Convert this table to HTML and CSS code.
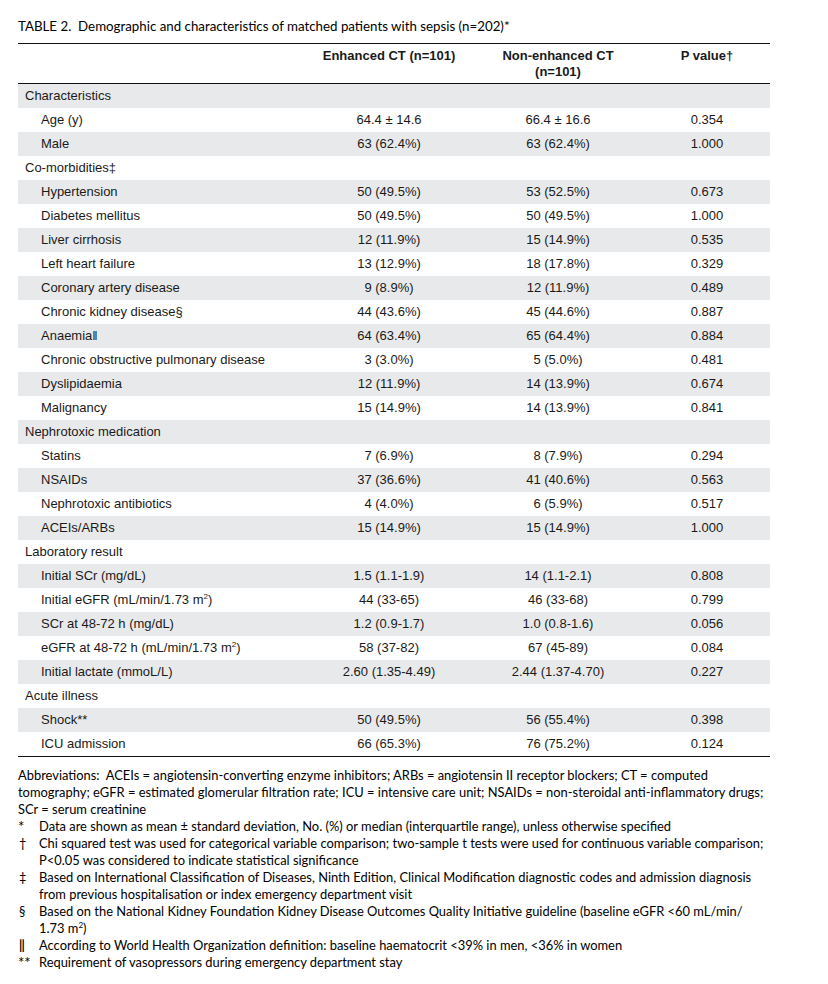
FILE: index.html
```html
<!DOCTYPE html>
<html lang="en">
<head>
<meta charset="utf-8">
<title>Table 2</title>
<link rel="stylesheet" href="styles.css">
</head>
<body>
<div class="page">
  <div class="caption">TABLE 2.&nbsp; Demographic and characteristics of matched patients with sepsis (n=202)*</div>
  <table class="data">
    <colgroup>
      <col class="c-label"><col class="c-enh"><col class="c-non"><col class="c-p">
    </colgroup>
    <thead>
      <tr>
        <th></th>
        <th>Enhanced CT (n=101)</th>
        <th>Non-enhanced CT<br>(n=101)</th>
        <th>P value†</th>
      </tr>
    </thead>
    <tbody>
      <tr class="sec"><td>Characteristics</td><td></td><td></td><td></td></tr>
      <tr><td class="sub">Age (y)</td><td>64.4 ± 14.6</td><td>66.4 ± 16.6</td><td>0.354</td></tr>
      <tr><td class="sub">Male</td><td>63 (62.4%)</td><td>63 (62.4%)</td><td>1.000</td></tr>
      <tr class="sec"><td>Co-morbidities‡</td><td></td><td></td><td></td></tr>
      <tr><td class="sub">Hypertension</td><td>50 (49.5%)</td><td>53 (52.5%)</td><td>0.673</td></tr>
      <tr><td class="sub">Diabetes mellitus</td><td>50 (49.5%)</td><td>50 (49.5%)</td><td>1.000</td></tr>
      <tr><td class="sub">Liver cirrhosis</td><td>12 (11.9%)</td><td>15 (14.9%)</td><td>0.535</td></tr>
      <tr><td class="sub">Left heart failure</td><td>13 (12.9%)</td><td>18 (17.8%)</td><td>0.329</td></tr>
      <tr><td class="sub">Coronary artery disease</td><td>9 (8.9%)</td><td>12 (11.9%)</td><td>0.489</td></tr>
      <tr><td class="sub">Chronic kidney disease§</td><td>44 (43.6%)</td><td>45 (44.6%)</td><td>0.887</td></tr>
      <tr><td class="sub">Anaemia‖</td><td>64 (63.4%)</td><td>65 (64.4%)</td><td>0.884</td></tr>
      <tr><td class="sub">Chronic obstructive pulmonary disease</td><td>3 (3.0%)</td><td>5 (5.0%)</td><td>0.481</td></tr>
      <tr><td class="sub">Dyslipidaemia</td><td>12 (11.9%)</td><td>14 (13.9%)</td><td>0.674</td></tr>
      <tr><td class="sub">Malignancy</td><td>15 (14.9%)</td><td>14 (13.9%)</td><td>0.841</td></tr>
      <tr class="sec"><td>Nephrotoxic medication</td><td></td><td></td><td></td></tr>
      <tr><td class="sub">Statins</td><td>7 (6.9%)</td><td>8 (7.9%)</td><td>0.294</td></tr>
      <tr><td class="sub">NSAIDs</td><td>37 (36.6%)</td><td>41 (40.6%)</td><td>0.563</td></tr>
      <tr><td class="sub">Nephrotoxic antibiotics</td><td>4 (4.0%)</td><td>6 (5.9%)</td><td>0.517</td></tr>
      <tr><td class="sub">ACEIs/ARBs</td><td>15 (14.9%)</td><td>15 (14.9%)</td><td>1.000</td></tr>
      <tr class="sec"><td>Laboratory result</td><td></td><td></td><td></td></tr>
      <tr><td class="sub">Initial SCr (mg/dL)</td><td>1.5 (1.1-1.9)</td><td>14 (1.1-2.1)</td><td>0.808</td></tr>
      <tr><td class="sub">Initial eGFR (mL/min/1.73 m<sup>2</sup>)</td><td>44 (33-65)</td><td>46 (33-68)</td><td>0.799</td></tr>
      <tr><td class="sub">SCr at 48-72 h (mg/dL)</td><td>1.2 (0.9-1.7)</td><td>1.0 (0.8-1.6)</td><td>0.056</td></tr>
      <tr><td class="sub">eGFR at 48-72 h (mL/min/1.73 m<sup>2</sup>)</td><td>58 (37-82)</td><td>67 (45-89)</td><td>0.084</td></tr>
      <tr><td class="sub">Initial lactate (mmoL/L)</td><td>2.60 (1.35-4.49)</td><td>2.44 (1.37-4.70)</td><td>0.227</td></tr>
      <tr class="sec"><td>Acute illness</td><td></td><td></td><td></td></tr>
      <tr><td class="sub">Shock**</td><td>50 (49.5%)</td><td>56 (55.4%)</td><td>0.398</td></tr>
      <tr><td class="sub">ICU admission</td><td>66 (65.3%)</td><td>76 (75.2%)</td><td>0.124</td></tr>
    </tbody>
  </table>
  <div class="notes">
    <p class="abbr">Abbreviations:&nbsp; ACEIs = angiotensin-converting enzyme inhibitors; ARBs = angiotensin II receptor blockers; CT = computed<br>tomography; eGFR = estimated glomerular filtration rate; ICU = intensive care unit; NSAIDs = non-steroidal anti-inflammatory drugs;<br>SCr = serum creatinine</p>
    <div class="fn"><span class="mk star">*</span><span>Data are shown as mean ± standard deviation, No. (%) or median (interquartile range), unless otherwise specified</span></div>
    <div class="fn"><span class="mk">†</span><span>Chi squared test was used for categorical variable comparison; two-sample t tests were used for continuous variable comparison;<br>P&lt;0.05 was considered to indicate statistical significance</span></div>
    <div class="fn"><span class="mk">‡</span><span>Based on International Classification of Diseases, Ninth Edition, Clinical Modification diagnostic codes and admission diagnosis<br>from previous hospitalisation or index emergency department visit</span></div>
    <div class="fn"><span class="mk">§</span><span>Based on the National Kidney Foundation Kidney Disease Outcomes Quality Initiative guideline (baseline eGFR &lt;60 mL/min/<br>1.73 m<sup>2</sup>)</span></div>
    <div class="fn"><span class="mk bar">‖</span><span>According to World Health Organization definition: baseline haematocrit &lt;39% in men, &lt;36% in women</span></div>
    <div class="fn"><span class="mk star">**</span><span>Requirement of vasopressors during emergency department stay</span></div>
  </div>
</div>
</body>
</html>
```
FILE: styles.css
```css
html, body {
  margin: 0;
  padding: 0;
  background: #ffffff;
}

.page {
  padding: 17px 0 0 18px;
  width: 752px;
  color: #111;
}

.caption {
  font-family: "Lato", "Open Sans", sans-serif;
  font-size: 13.3px;
  line-height: 18px;
  color: #000;
  margin-bottom: 8px;
  white-space: nowrap;
}

.data {
  width: 752px;
  table-layout: fixed;
  border-collapse: collapse;
  font-family: "Liberation Sans", Arial, sans-serif;
  font-size: 13px;
  color: #1a1a1a;
}

.c-label { width: 288px; }
.c-enh { width: 166px; }
.c-non { width: 172px; }
.c-p { width: 126px; }

.data thead tr {
  border-top: 1px solid #111;
  border-bottom: 1px solid #111;
}

.data th {
  font-weight: bold;
  text-align: center;
  vertical-align: top;
  height: 40px;
  padding: 4px 0 0 0;
  line-height: 16px;
  box-sizing: border-box;
}

.data tbody tr {
  height: 24px;
}

.data tbody tr:nth-child(odd) {
  background: #e8e9ea;
}

.data tbody tr:last-child {
  border-bottom: 1px solid #111;
}

.data td {
  padding: 0;
  line-height: 24px;
  text-align: center;
  vertical-align: middle;
  white-space: nowrap;
}

.data td:first-child {
  text-align: left;
  padding-left: 7px;
}

.data td.sub {
  padding-left: 23px;
}

.data sup {
  font-size: 8px;
  line-height: 0;
  vertical-align: 5px;
}

.notes {
  margin-top: 10px;
  font-family: "Lato", "Open Sans", sans-serif;
  font-size: 12.9px;
  line-height: 17px;
  color: #000;
}

.notes p {
  margin: 0;
  white-space: nowrap;
}

.fn {
  display: grid;
  grid-template-columns: 21px auto;
  white-space: nowrap;
}

.fn .mk {
  padding-left: 1px;
}

.fn .mk.star {
  font-size: 15px;
  padding-left: 0;
}

.fn .mk.bar {
  font-weight: bold;
}

.notes sup {
  font-size: 8px;
  line-height: 0;
  vertical-align: 5px;
}
```
